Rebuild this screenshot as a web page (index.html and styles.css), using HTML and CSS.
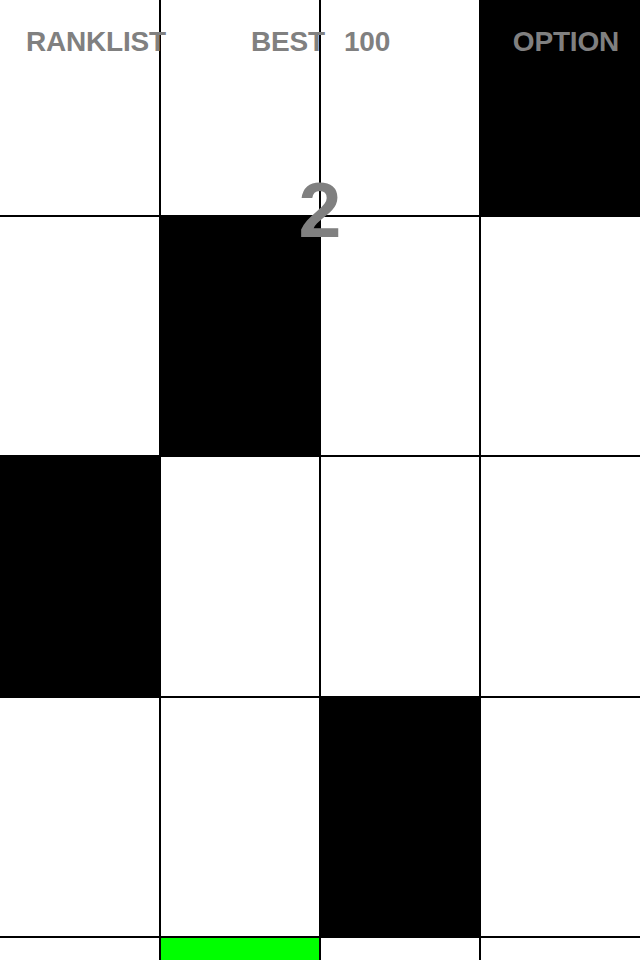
FILE: index.html
```html
<!DOCTYPE html>
<html>
<head>
<meta charset="utf-8">
<link rel="stylesheet" href="styles.css">
</head>
<body>
<div class="game">
  <div class="board">
    <div class="row r0"><div class="cell"></div><div class="cell"></div><div class="cell"></div><div class="cell black"></div></div>
    <div class="row r1"><div class="cell"></div><div class="cell black"></div><div class="cell"></div><div class="cell"></div></div>
    <div class="row r2"><div class="cell black"></div><div class="cell"></div><div class="cell"></div><div class="cell"></div></div>
    <div class="row r3"><div class="cell"></div><div class="cell"></div><div class="cell black"></div><div class="cell"></div></div>
    <div class="row r4"><div class="cell"></div><div class="cell green"></div><div class="cell"></div><div class="cell"></div></div>
  </div>
  <div class="hud">
    <span class="hud-item ranklist">RANKLIST</span>
    <span class="hud-item best">BEST<span class="best-val">100</span></span>
    <span class="hud-item option">OPTION</span>
  </div>
  <div class="score">2</div>
</div>
</body>
</html>
```
FILE: styles.css
```css
html, body {
  margin: 0;
  padding: 0;
  background: #fff;
}
.game {
  position: relative;
  width: 640px;
  height: 960px;
  overflow: hidden;
  font-family: "Liberation Sans", Arial, sans-serif;
  font-weight: bold;
}
.board {
  display: flex;
  flex-direction: column;
  width: 640px;
  height: 960px;
}
.row {
  display: grid;
  grid-template-columns: 160px 160px 160px 160px;
  box-sizing: border-box;
  border-bottom: 2px solid #000;
}
.r0 { height: 217px; }
.r1 { height: 240px; }
.r2 { height: 241px; }
.r3 { height: 240px; }
.r4 { height: 22px; border-bottom: none; }
.cell {
  background: #fff;
  box-sizing: border-box;
  border-left: 1px solid #000;
  border-right: 1px solid #000;
}
.cell:first-child { border-left: none; }
.cell:last-child { border-right: none; }
.cell.black { background: #000; }
.cell.green { background: #00ff00; }
.hud {
  position: absolute;
  top: 0;
  left: 0;
  width: 640px;
  height: 80px;
}
.hud-item {
  position: absolute;
  top: 26px;
  font-size: 28px;
  line-height: 32px;
  color: #808080;
  white-space: nowrap;
  letter-spacing: -0.2px;
}
.ranklist { left: 26px; }
.best { left: 251px; }
.best-val { margin-left: 19px; }
.option { right: 21px; }
.score {
  position: absolute;
  top: 168px;
  left: 0;
  width: 640px;
  text-align: center;
  font-size: 77px;
  line-height: 84px;
  color: #808080;
}
```
